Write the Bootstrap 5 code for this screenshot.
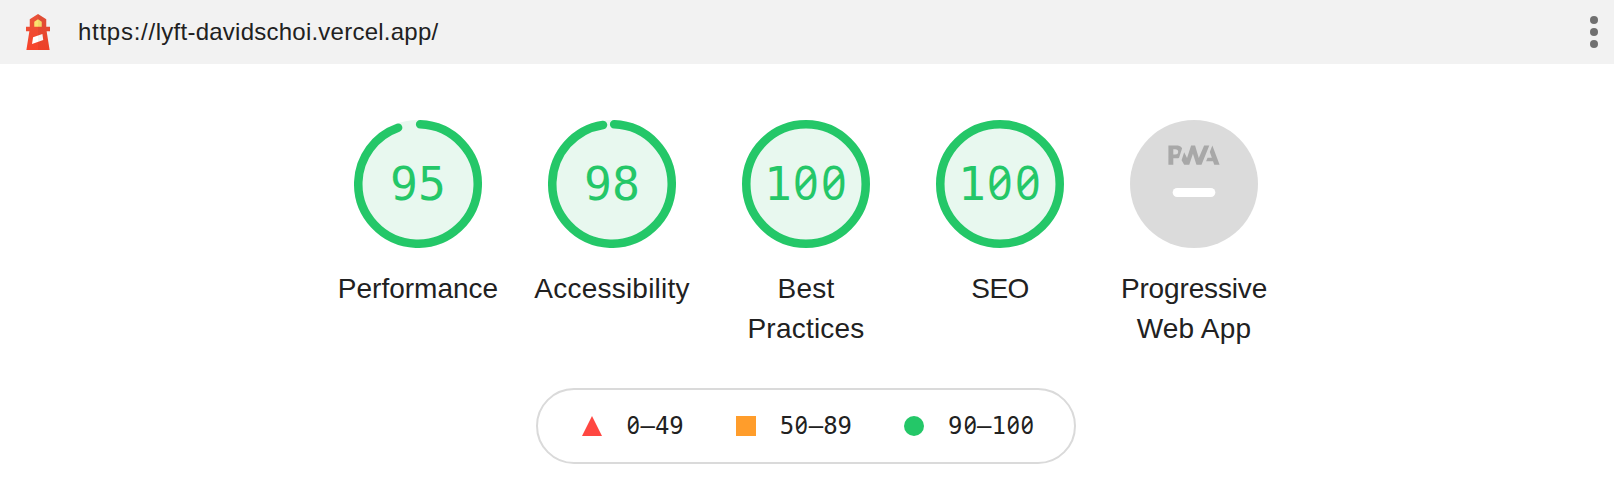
<!DOCTYPE html>
<html lang="en">
<head>
<meta charset="utf-8">
<title>Lighthouse Report</title>
<link href="https://cdn.jsdelivr.net/npm/bootstrap@5.3.0/dist/css/bootstrap.min.css" rel="stylesheet">
<style>
body{background:#fff;color:#212121;font-family:"Liberation Sans",Arial,sans-serif;overflow:hidden}
.topbar{height:64px;background:#f2f2f2;padding:0 14px 0 26px}
.topbar .url{font-size:24px;line-height:36px;letter-spacing:.24px;margin-left:28px;padding-bottom:1px}
.topbar .scheme{letter-spacing:.72px}
.scores{padding-top:56px;padding-right:2px}
.gauge-item{width:194px}
.gauge{width:128px;height:128px}
.gauge svg{width:128px;height:128px;display:block}
.gauge .score{position:absolute;inset:0;line-height:128px;text-align:center;font-size:46.4px;color:#24c768}
.mono{font-family:"DejaVu Sans Mono",monospace;white-space:nowrap}
.mono i{font-style:normal;display:inline-block;width:.602em;text-align:center;font-family:"Noto Sans",sans-serif;font-feature-settings:"zero" 1;line-height:1;transform:scale(.95,1.04);transform-origin:50% 80%}
.gauge-label{font-size:28px;line-height:40px;margin-top:21px}
.wide{letter-spacing:.22px}
.snug{letter-spacing:-.15px}
.legend-box{width:540px;height:76px;border:2px solid #dadada;border-radius:38px;margin-top:39px;padding-left:44px;font-size:24px;position:relative;right:1px}
.legend-box svg{width:20px;height:20px;margin-right:24px}
.legend-box span+svg{margin-left:52px}
</style>
</head>
<body>
<header class="topbar d-flex align-items-center">
  <svg width="24" height="36" viewBox="6 3 12 18">
    <defs><linearGradient id="tower" x1="0" y1="0" x2="0" y2="1"><stop offset="0" stop-color="#e8533a"/><stop offset="1" stop-color="#f8432a"/></linearGradient></defs>
    <path d="M9 12h6v6.500H9z" fill="#fff"/><path d="M10 5.500h4v4h-4z" fill="#fbe16e"/>
    <path fill-rule="evenodd" d="M12 3l4.125 2.625v3.750H18v2.250h-1.688L17.812 21H6.188l1.500-9.375H6v-2.250h1.875V5.648zM14.201 12.938L9.540 14.633 9 18.028l5.625-2.062zM12.005 5.670l-1.880 1.207v2.498h3.750V6.860z" fill="url(#tower)"/>
    <path d="M12 3l4.125 2.625v3.750H18v2.250h-1.688L17.812 21H12z" fill="#000" opacity=".04"/>
  </svg>
  <span class="url"><span class="scheme">https://</span>lyft-davidschoi.vercel.app/</span>
  <svg class="ms-auto" width="12" height="36" viewBox="0 0 12 36" fill="#707070"><circle cx="6" cy="6" r="4"/><circle cx="6" cy="18" r="4"/><circle cx="6" cy="30" r="4"/></svg>
</header>
<main>
  <div class="scores d-flex justify-content-center text-center">
    <div class="gauge-item"><div class="gauge position-relative mx-auto"><svg viewBox="0 0 120 120"><circle r="60" cx="60" cy="60" fill="#e8f8ef"/><circle r="56" cx="60" cy="60" fill="none" stroke="#24c768" stroke-width="8" stroke-linecap="round" stroke-dasharray="330.27 351.86" transform="rotate(-87.95 60 60)"/></svg><div class="score mono">95</div></div><div class="gauge-label">Performance</div></div>
    <div class="gauge-item"><div class="gauge position-relative mx-auto"><svg viewBox="0 0 120 120"><circle r="60" cx="60" cy="60" fill="#e8f8ef"/><circle r="56" cx="60" cy="60" fill="none" stroke="#24c768" stroke-width="8" stroke-linecap="round" stroke-dasharray="340.82 351.86" transform="rotate(-87.95 60 60)"/></svg><div class="score mono">98</div></div><div class="gauge-label wide">Accessibility</div></div>
    <div class="gauge-item"><div class="gauge position-relative mx-auto"><svg viewBox="0 0 120 120"><circle r="56" cx="60" cy="60" fill="#e8f8ef" stroke="#24c768" stroke-width="8"/></svg><div class="score mono">1<i>0</i><i>0</i></div></div><div class="gauge-label wide">Best<br>Practices</div></div>
    <div class="gauge-item"><div class="gauge position-relative mx-auto"><svg viewBox="0 0 120 120"><circle r="56" cx="60" cy="60" fill="#e8f8ef" stroke="#24c768" stroke-width="8"/></svg><div class="score mono">1<i>0</i><i>0</i></div></div><div class="gauge-label"><span style="letter-spacing:-.6px">SEO</span></div></div>
    <div class="gauge-item"><div class="gauge position-relative mx-auto">
      <svg viewBox="0 0 60 60"><circle r="30" cx="30" cy="30" fill="#dbdbdb"/>
        <g fill="#a8a8a8">
          <path d="M35.660 19.390l.7-1.750h2L37.400 15 38.600 12l3.400 9h-2.510l-.58-1.610z"/>
          <path d="M33.520 21l3.650-9h-2.420l-2.500 5.820L30.500 12h-1.860l-1.900 5.820-1.350-2.650-1.210 3.720L25.400 21h2.380l1.720-5.200 1.640 5.200z"/>
          <path d="M20.300 17.910h1.480c.45 0 .85-.05 1.200-.15l.39-1.180 1.070-3.300a2.640 2.640 0 0 0-.28-.37c-.55-.6-1.360-.91-2.420-.91H18v9h2.300zm1.960-3.840c.22.22.33.5.33.87 0 .36-.1.65-.29.87-.2.23-.59.35-1.150.35h-.86v-2.410h.87c.52 0 .89.1 1.100.32z"/>
        </g>
        <path d="M22.100 34h15.800" stroke="#fff" stroke-width="4.200" stroke-linecap="round"/></svg>
    </div><div class="gauge-label"><span class="snug">Progressive</span><br><span class="wide">Web App</span></div></div>
  </div>
  <div class="legend-box mono d-flex align-items-center mx-auto">
    <svg viewBox="0 0 20 20"><path d="M10 0l10 20H0z" fill="#ff4741"/></svg><span><i>0</i>–49</span>
    <svg viewBox="0 0 20 20"><path d="M0 0h20v20H0z" fill="#ff9d2b"/></svg><span>5<i>0</i>–89</span>
    <svg viewBox="0 0 20 20"><circle cx="10" cy="10" r="10" fill="#24c768"/></svg><span>9<i>0</i>–1<i>0</i><i>0</i></span>
  </div>
</main>
<script src="https://cdn.jsdelivr.net/npm/bootstrap@5.3.0/dist/js/bootstrap.bundle.min.js"></script>
</body>
</html>
